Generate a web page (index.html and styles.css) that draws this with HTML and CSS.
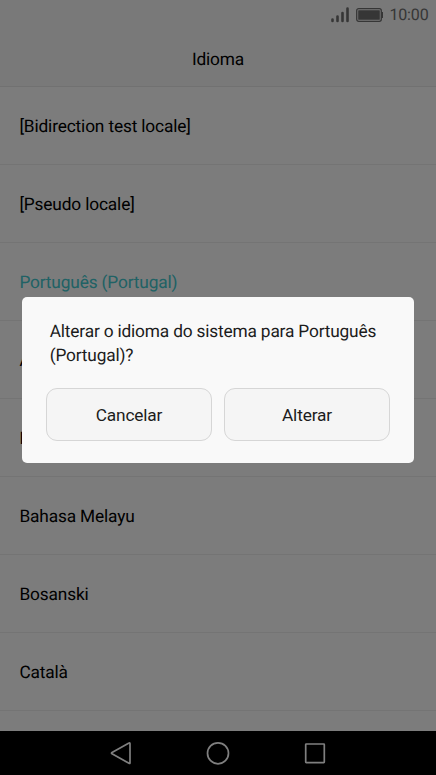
FILE: index.html
```html
<!DOCTYPE html>
<html lang="pt">
<head>
  <meta charset="UTF-8">
  <meta name="viewport" content="width=device-width, initial-scale=1.0">
  <title>Idioma</title>
  <link rel="stylesheet" href="styles.css">
</head>
<body>
  <div class="screen">
    <!-- Status Bar -->
    <div class="status-bar">
      <svg class="signal" width="18" height="16" viewBox="0 0 18 16">
        <path d="M1.500 12.500v1.500M6.500 9.500v4.500M11.500 6v8M16.500 1.500v12.500" />
      </svg>
      <svg class="battery" width="28" height="14" viewBox="0 0 28 14">
        <rect class="battery-case" x="0.700" y="0.700" width="24.600" height="12.600" rx="2" />
        <rect x="2.200" y="2.200" width="21.600" height="9.600" rx="0.500" />
        <rect x="25.500" y="4" width="1.500" height="6" />
      </svg>
      <span class="time">10:00</span>
    </div>

    <!-- Header -->
    <header class="header">
      <h1>Idioma</h1>
    </header>

    <!-- Language List -->
    <ul class="language-list">
      <li>[Bidirection test locale]</li>
      <li>[Pseudo locale]</li>
      <li class="selected">Português (Portugal)</li>
      <li>A</li>
      <li>B</li>
      <li>Bahasa Melayu</li>
      <li>Bosanski</li>
      <li>Català</li>
      <li></li>
    </ul>

    <!-- Navigation Bar -->
    <nav class="nav-bar">
      <svg width="24" height="24" viewBox="0 0 24 24"><path d="M21 2.700v19q0 1.200-1 .6L3 12.800q-1-.6 0-1.200L20 2.100q1-.6 1 .6z" /></svg>
      <svg width="24" height="24" viewBox="0 0 24 24"><circle cx="12" cy="12.300" r="10.500" /></svg>
      <svg width="24" height="24" viewBox="0 0 24 24"><rect x="2.700" y="3" width="18.600" height="18.600" rx="0.500" /></svg>
    </nav>
  </div>

  <!-- Change Language Dialog -->
  <div class="overlay">
    <div class="dialog">
      <p>Alterar o idioma do sistema para Português (Portugal)?</p>
      <div class="dialog-buttons">
        <button>Cancelar</button>
        <button>Alterar</button>
      </div>
    </div>
  </div>
</body>
</html>
```

FILE: styles.css
```css
/* Global Styles */
* {
  margin: 0;
  padding: 0;
  box-sizing: border-box;
}

body {
  font-family: Roboto, sans-serif;
  font-size: 17.3px;
  letter-spacing: -0.15px;
  text-rendering: geometricPrecision;
  color: #000;
  height: 100vh;
  overflow: hidden;
}

.screen {
  display: flex;
  flex-direction: column;
  height: 100vh;
  background: #f8f8f8;
}

/* Status Bar */
.status-bar {
  display: flex;
  align-items: center;
  justify-content: flex-end;
  height: 30px;
  padding-right: 7.5px;
  background: #f2f2f2;
}

.signal {
  fill: none;
  stroke: #6c6c6c;
  stroke-width: 2.6;
  stroke-linecap: round;
  margin-right: 7px;
}

.battery {
  fill: #6c6c6c;
  margin-right: 5px;
}

.battery-case {
  fill: none;
  stroke: #6c6c6c;
  stroke-width: 1.3;
}

.time {
  font-size: 16px;
  line-height: 30px;
  color: #6c6c6c;
}

/* Header */
.header {
  height: 57px;
  background: #f2f2f2;
  border-bottom: 1px solid #e2e2e2;
}

h1 {
  font-size: inherit;
  font-weight: 400;
  line-height: 60px;
  text-align: center;
}

/* Language List */
.language-list {
  flex: 1;
  list-style: none;
  overflow: hidden;
}

.language-list li {
  height: 77.95px;
  padding-left: 19.4px;
  line-height: 81px;
  border-bottom: 1px solid #e9e9e9;
}

.language-list .selected {
  color: #40c4ca;
}

/* Navigation Bar */
.nav-bar {
  display: flex;
  justify-content: center;
  align-items: center;
  gap: 73px;
  height: 44px;
  background: #000;
}

.nav-bar svg {
  fill: none;
  stroke: #fff;
  stroke-width: 1.7;
}

/* Dialog */
.overlay {
  position: absolute;
  inset: 0;
  background: rgba(0, 0, 0, 0.5);
  display: flex;
  justify-content: center;
  align-items: flex-start;
  padding-top: 297px;
}

.dialog {
  width: 392px;
  height: 166px;
  padding: 23px 24px;
  background: #f9f9f9;
  border-radius: 5px;
}

.dialog p {
  padding-left: 3.7px;
  line-height: 24px;
  letter-spacing: -0.17px;
  color: #1c1c1c;
}

.dialog-buttons {
  display: flex;
  gap: 12px;
  margin-top: 20px;
}

button {
  flex: 1;
  height: 53px;
  font: inherit;
  letter-spacing: inherit;
  color: #1c1c1c;
  background: #f5f5f5;
  border: 1px solid #d6d6d6;
  border-radius: 11px;
}
```
